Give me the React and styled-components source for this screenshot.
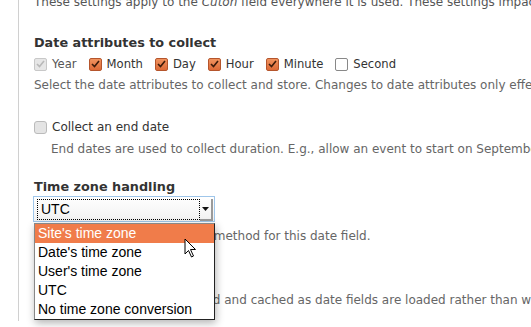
import styled, { createGlobalStyle } from 'styled-components'

const Global = createGlobalStyle`
  html, body {
    margin: 0;
    padding: 0;
    background: #fff;
    overflow: hidden;
  }
  body {
    font-family: 'DejaVu Sans', Verdana, sans-serif;
    width: 531px;
    height: 327px;
  }
`

const Page = styled.div`
  width: 531px;
  height: 327px;
  overflow: hidden;
  position: relative;
`

const Fieldset = styled.div`
  margin-left: 18px;
  border-left: 1px solid #d0d0d0;
  height: 100%;
  padding-left: 15px;
  white-space: nowrap;
`

const Intro = styled.p`
  margin: -6px 0 0;
  font-size: 12px;
  line-height: 16px;
  color: #555;
`

const Heading = styled.div`
  font-size: 12.8px;
  font-weight: bold;
  color: #333;
  line-height: 16px;
  margin-top: ${(p) => p.$top || 0}px;
`

const Options = styled.div`
  display: flex;
  align-items: center;
  gap: 12px;
  margin-top: 5px;
  height: 16px;
`

const Option = styled.label`
  display: flex;
  align-items: center;
  gap: 5px;
  height: 16px;
  font-size: ${(p) => (p.$small ? 11.6 : 12)}px;
  color: ${(p) => (p.$disabled ? '#555' : '#333')};
  margin-top: ${(p) => p.$top || 0}px;
`

const Box = styled.span`
  width: 11px;
  height: 11px;
  border-radius: 2px;
  border: 1px solid ${(p) => (p.$checked ? '#b5552c' : p.$disabled ? '#c8c8c8' : '#888')};
  background: ${(p) => (p.$checked ? 'linear-gradient(#f0935f, #dd6a37)' : p.$disabled ? '#e6e6e6' : '#fff')};
  display: flex;
  align-items: center;
  justify-content: center;
  flex: none;
`

const Description = styled.div`
  font-size: 12px;
  color: #666;
  line-height: 16px;
  margin-top: ${(p) => p.$top || 6}px;
  padding-left: ${(p) => p.$indent || 0}px;
`

const SingleBox = styled.span`
  width: 11px;
  height: 11px;
  border-radius: 3px;
  border: 1px solid #bbb;
  background: #e4e4e4;
  flex: none;
`

const SelectWrap = styled.div`
  position: relative;
  margin: 1px 0 0 -1px;
  width: 182px;
`

const Select = styled.div`
  height: 26px;
  border: 1px solid #9fc6ea;
  background: linear-gradient(#fff, #f1f1f1);
  display: flex;
  align-items: flex-start;
  padding: 2px 0 0 3px;
  box-sizing: border-box;
`

const Value = styled.div`
  width: 163px;
  height: 21px;
  box-sizing: border-box;
  border: 1px dotted #000;
  font-family: 'Liberation Sans', Arial, sans-serif;
  font-size: 14px;
  line-height: 19px;
  padding-left: 3px;
  color: #000;
`

const Arrow = styled.div`
  width: 13px;
  height: 22px;
  border-right: 2px solid #9a9a9a;
  border-bottom: 2px solid #9a9a9a;
  box-sizing: border-box;
  display: flex;
  align-items: center;
  justify-content: center;
`

const List = styled.ul`
  position: absolute;
  left: 1px;
  top: 27px;
  width: 181px;
  margin: 0;
  padding: 0;
  list-style: none;
  background: #fff;
  border: 1px solid #222;
  border-left-color: #888;
  border-top-color: #888;
  box-shadow: 1px 3px 8px rgba(0, 0, 0, 0.3);
  box-sizing: border-box;
  z-index: 2;
`

const ListItem = styled.li`
  height: 19px;
  line-height: 19px;
  padding-left: 3px;
  font-family: 'Liberation Sans', Arial, sans-serif;
  font-size: 14px;
  color: ${(p) => (p.$active ? '#fff' : '#000')};
  background: ${(p) => (p.$active ? '#f07c4a' : 'transparent')};
`

const Cursor = styled.svg`
  position: absolute;
  left: 184px;
  top: 238px;
  z-index: 3;
`

const Check = ({ color }) => (
  <svg width="9" height="8" viewBox="0 0 9 8">
    <path d="M1 4 L3.5 6.5 L8 1" fill="none" stroke={color} strokeWidth="1.6" />
  </svg>
)

const attributes = [
  { label: 'Year', disabled: true },
  { label: 'Month', checked: true },
  { label: 'Day', checked: true },
  { label: 'Hour', checked: true },
  { label: 'Minute', checked: true },
  { label: 'Second' },
]

const zones = ["Site's time zone", "Date's time zone", "User's time zone", 'UTC', 'No time zone conversion']

export default function App() {
  return (
    <Page>
      <Global />
      <Fieldset>
        <Intro>
          These settings apply to the <em>Cuton</em> field everywhere it is used. These settings impact the way that data is stored
        </Intro>

        <Heading $top={25}>Date attributes to collect</Heading>
        <Options>
          {attributes.map((a) => (
            <Option key={a.label} $small $disabled={a.disabled}>
              <Box $checked={a.checked} $disabled={a.disabled}>
                {a.checked && <Check color="#3a1a0a" />}
                {a.disabled && <Check color="#b8b8b8" />}
              </Box>
              {a.label}
            </Option>
          ))}
        </Options>
        <Description $top={5}>
          Select the date attributes to collect and store. Changes to date attributes only effect new or updated content.
        </Description>

        <Option $top={26}>
          <SingleBox />
          Collect an end date
        </Option>
        <Description $top={6} $indent={17}>
          End dates are used to collect duration. E.g., allow an event to start on September 15th and end on September 16th.
        </Description>

        <Heading $top={22}>Time zone handling</Heading>
        <SelectWrap>
          <Select>
            <Value>UTC</Value>
            <Arrow>
              <svg width="7" height="4" viewBox="0 0 7 4">
                <path d="M0 0 H7 L3.5 4 Z" fill="#111" />
              </svg>
            </Arrow>
          </Select>
          <List>
            {zones.map((z, i) => (
              <ListItem key={z} $active={i === 0}>{z}</ListItem>
            ))}
          </List>
        </SelectWrap>
        <Description $top={6}>Select the timezone handling method for this date field.</Description>

        <Option $top={26}>
          <SingleBox />
          Cache dates
        </Option>
        <Description $top={6} $indent={17}>
          Date objects can be created and cached as date fields are loaded rather than when they are displayed to improve performance.
        </Description>
      </Fieldset>
      <Cursor width="13" height="21" viewBox="0 0 13 21">
        <path d="M1 1 L1 16 L4.5 12.5 L7.5 19 L9.5 18 L6.5 11.5 L11.5 11.5 Z" fill="#fff" stroke="#000" strokeWidth="1" strokeLinejoin="round" />
      </Cursor>
    </Page>
  )
}
